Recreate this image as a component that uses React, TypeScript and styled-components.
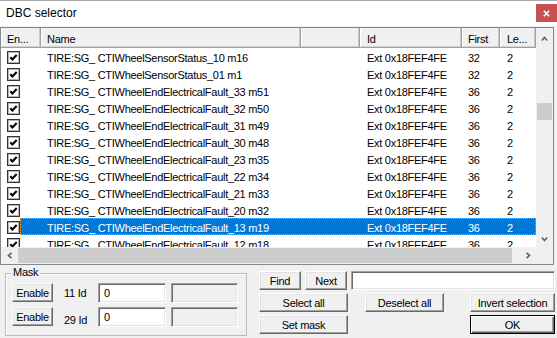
import React from "react";
import styled, { createGlobalStyle } from "styled-components";

const GlobalStyle = createGlobalStyle`
  html, body { margin: 0; padding: 0; background: #f0f0f0; }
  body {
    font-family: "Liberation Sans", Arial, sans-serif;
    font-size: 11px;
    letter-spacing: -0.28px;
    color: #000;
  }
  * { box-sizing: border-box; }
`;

const Window = styled.div`
  width: 557px;
  height: 338px;
  background: #f0f0f0;
  display: flex;
  flex-direction: column;
  overflow: hidden;
`;

const TitleBar = styled.div`
  height: 26px;
  flex-shrink: 0;
  background: #fff;
  border-top: 1px solid #a8a8a8;
  display: flex;
  align-items: flex-start;
  justify-content: space-between;
`;

const Title = styled.div`
  padding-left: 6px;
  font-size: 12px;
  letter-spacing: 0;
  line-height: 24px;
`;

const CloseButton = styled.div`
  width: 21px;
  height: 18px;
  margin-top: 3px;
  background: #c75050;
  display: flex;
  align-items: center;
  justify-content: center;
`;

const ListView = styled.div`
  margin-top: 1px;
  width: 554px;
  height: 238px;
  flex-shrink: 0;
  border: 1px solid #828790;
  background: #fff;
  display: grid;
  grid-template-columns: 535px 17px;
  grid-template-rows: 219px 17px;
`;

const ListMain = styled.div`
  display: flex;
  flex-direction: column;
  overflow: hidden;
`;

const Header = styled.div`
  display: flex;
  height: 20px;
  flex-shrink: 0;
`;

const HeaderCell = styled.div<{ $w: number; $pad: number }>`
  width: ${(p) => p.$w}px;
  flex-shrink: 0;
  height: 20px;
  padding: 5px 0 0 ${(p) => p.$pad}px;
  line-height: 13px;
  white-space: nowrap;
  overflow: hidden;
  background: #f0f0f0;
  border-right: 1px solid #a0a0a0;
  border-bottom: 1px solid #a0a0a0;
  box-shadow: inset 1px 0 #fff, inset -1px 0 #c9c9c9, inset 0 -1px #d4d4d4;
`;

const Rows = styled.div`
  flex: 1;
  overflow: hidden;
  display: flex;
  flex-direction: column;
`;

const Row = styled.div`
  display: flex;
  height: 17px;
  flex-shrink: 0;
`;

const CheckCell = styled.div`
  width: 19px;
  flex-shrink: 0;
  padding: 3px 0 0 6px;
`;

const RowBody = styled.div<{ $selected?: boolean }>`
  display: flex;
  width: 516px;
  flex-shrink: 0;
  background: ${(p) => (p.$selected ? "#0078d7" : "transparent")};
  color: ${(p) => (p.$selected ? "#fff" : "#000")};
  outline: ${(p) => (p.$selected ? "1px dotted #f0a040" : "none")};
  outline-offset: -1px;
`;

const Cell = styled.div<{ $w: number; $pad: number }>`
  width: ${(p) => p.$w}px;
  flex-shrink: 0;
  padding: 4px 0 0 ${(p) => p.$pad}px;
  line-height: 13px;
  white-space: nowrap;
  overflow: hidden;
`;

const VScroll = styled.div`
  background: #f0f0f0;
  display: flex;
  flex-direction: column;
`;

const ArrowBox = styled.div<{ $h?: number; $w?: number }>`
  height: ${(p) => (p.$h ? `${p.$h}px` : "auto")};
  width: ${(p) => (p.$w ? `${p.$w}px` : "auto")};
  flex-shrink: 0;
  display: flex;
  align-items: center;
  justify-content: center;
`;

const VThumb = styled.div`
  margin: 53px 1px 0;
  height: 17px;
  background: #cdcdcd;
`;

const Spacer = styled.div`
  flex: 1;
`;

const HScroll = styled.div`
  background: #f0f0f0;
  display: flex;
`;

const HThumb = styled.div`
  width: 494px;
  margin: 1px 0;
  background: #cdcdcd;
`;

const Corner = styled.div`
  background: #f0f0f0;
`;

const Bottom = styled.div`
  display: flex;
  align-items: flex-start;
`;

const Group = styled.div`
  position: relative;
  margin: 8px 0 0 5px;
  width: 242px;
  height: 63px;
  border: 1px solid #bcbcbc;
  box-shadow: inset 1px 1px #fff;
  padding: 9px 0 0 6px;
  display: flex;
  flex-direction: column;
  gap: 4px;
`;

const Legend = styled.span`
  position: absolute;
  top: -8px;
  left: 5px;
  padding: 0 2px;
  line-height: 13px;
  background: #f0f0f0;
`;

const GroupRow = styled.div`
  display: flex;
  align-items: flex-start;
  height: 20px;
`;

const IdLabel = styled.div<{ $drop: number }>`
  width: 34px;
  margin-left: 11px;
  padding-top: ${(p) => p.$drop}px;
  line-height: 13px;
  white-space: nowrap;
`;

const TextBox = styled.div<{ $w: number; $ml?: number; $disabled?: boolean; $h?: number }>`
  width: ${(p) => p.$w}px;
  height: ${(p) => p.$h ?? 20}px;
  margin-left: ${(p) => p.$ml ?? 0}px;
  background: ${(p) => (p.$disabled ? "#f0f0f0" : "#fff")};
  border-style: solid;
  border-width: 1px;
  border-color: #a0a0a0 #fff #fff #a0a0a0;
  box-shadow: inset 1px 1px #696969, inset -1px -1px #e3e3e3;
  padding: 0 0 0 5px;
  display: flex;
  align-items: center;
  line-height: 13px;
`;

const Button = styled.button<{ $w: number; $ml?: number; $default?: boolean }>`
  width: ${(p) => p.$w}px;
  height: 19px;
  margin: 0 0 0 ${(p) => (p.$ml === -1 ? "auto" : `${p.$ml ?? 0}px`)};
  padding: 0;
  flex-shrink: 0;
  font: inherit;
  letter-spacing: inherit;
  color: #000;
  background: #f0f0f0;
  border-style: solid;
  border-width: 1px;
  border-color: ${(p) => (p.$default ? "#000" : "#fff #696969 #696969 #fff")};
  box-shadow: ${(p) =>
    p.$default
      ? "inset 1px 1px #fff, inset -1px -1px #696969, inset -2px -2px #a0a0a0"
      : "inset -1px -1px #a0a0a0, inset 1px 1px #e3e3e3"};
  display: flex;
  align-items: center;
  justify-content: center;
`;

const Panel = styled.div`
  margin: 6px 0 0 12px;
  width: 296px;
  display: flex;
  flex-direction: column;
  gap: 3px;
`;

const PanelRow = styled.div`
  display: flex;
  height: 19px;
`;

const CheckBox = () => (
  <svg width="13" height="13" viewBox="0 0 13 13">
    <rect x="0.5" y="0.5" width="12" height="12" fill="#fff" stroke="#333" />
    <rect x="1.5" y="1.5" width="10" height="10" fill="none" stroke="#b5b5b5" />
    <polyline points="3.3,6.2 5.4,8.4 9.7,4" fill="none" stroke="#000" strokeWidth="2.1" />
  </svg>
);

const Chevron = ({ dir }: { dir: "up" | "down" | "left" | "right" }) => {
  const pts = {
    up: "0.8,4.5 3.5,1.5 6.2,4.5",
    down: "0.8,1.5 3.5,4.5 6.2,1.5",
    left: "4.5,0.8 1.5,3.5 4.5,6.2",
    right: "1.5,0.8 4.5,3.5 1.5,6.2",
  }[dir];
  const horiz = dir === "left" || dir === "right";
  return (
    <svg width={horiz ? 6 : 7} height={horiz ? 7 : 6} viewBox={horiz ? "0 0 6 7" : "0 0 7 6"}>
      <polyline points={pts} fill="none" stroke="#606060" strokeWidth="1.6" />
    </svg>
  );
};

const cols = [
  { w: 21, pad: 0 },
  { w: 260, pad: 6 },
  { w: 59, pad: 6 },
  { w: 102, pad: 7 },
  { w: 38, pad: 6 },
  { w: 36, pad: 7 },
];

const rows = [
  { name: "TIRE:SG_ CTIWheelSensorStatus_10 m16", first: "32" },
  { name: "TIRE:SG_ CTIWheelSensorStatus_01 m1", first: "32" },
  { name: "TIRE:SG_ CTIWheelEndElectricalFault_33 m51", first: "36" },
  { name: "TIRE:SG_ CTIWheelEndElectricalFault_32 m50", first: "36" },
  { name: "TIRE:SG_ CTIWheelEndElectricalFault_31 m49", first: "36" },
  { name: "TIRE:SG_ CTIWheelEndElectricalFault_30 m48", first: "36" },
  { name: "TIRE:SG_ CTIWheelEndElectricalFault_23 m35", first: "36" },
  { name: "TIRE:SG_ CTIWheelEndElectricalFault_22 m34", first: "36" },
  { name: "TIRE:SG_ CTIWheelEndElectricalFault_21 m33", first: "36" },
  { name: "TIRE:SG_ CTIWheelEndElectricalFault_20 m32", first: "36" },
  { name: "TIRE:SG_ CTIWheelEndElectricalFault_13 m19", first: "36", selected: true },
  { name: "TIRE:SG_ CTIWheelEndElectricalFault_12 m18", first: "36" },
];

export default function App() {
  return (
    <>
      <GlobalStyle />
      <Window>
        <TitleBar>
          <Title>DBC selector</Title>
          <CloseButton>
            <svg width="7" height="7" viewBox="0 0 7 7">
              <path d="M0.8 0.8 L6.2 6.2 M6.2 0.8 L0.8 6.2" stroke="#fff" strokeWidth="1.6" />
            </svg>
          </CloseButton>
        </TitleBar>

        <ListView>
          <ListMain>
            <Header>
              <HeaderCell $w={40} $pad={6}>En...</HeaderCell>
              <HeaderCell $w={260} $pad={6}>Name</HeaderCell>
              <HeaderCell $w={59} $pad={6}></HeaderCell>
              <HeaderCell $w={102} $pad={7}>Id</HeaderCell>
              <HeaderCell $w={38} $pad={6}>First</HeaderCell>
              <HeaderCell $w={36} $pad={7}>Le...</HeaderCell>
            </Header>
            <Rows>
              {rows.map((r) => (
                <Row key={r.name}>
                  <CheckCell>
                    <CheckBox />
                  </CheckCell>
                  <RowBody $selected={r.selected}>
                    <Cell $w={cols[0].w} $pad={cols[0].pad} />
                    <Cell $w={cols[1].w} $pad={cols[1].pad}>{r.name}</Cell>
                    <Cell $w={cols[2].w} $pad={cols[2].pad} />
                    <Cell $w={cols[3].w} $pad={cols[3].pad}>Ext 0x18FEF4FE</Cell>
                    <Cell $w={cols[4].w} $pad={cols[4].pad}>{r.first}</Cell>
                    <Cell $w={cols[5].w} $pad={cols[5].pad}>2</Cell>
                  </RowBody>
                </Row>
              ))}
            </Rows>
          </ListMain>
          <VScroll>
            <ArrowBox $h={22}>
              <Chevron dir="up" />
            </ArrowBox>
            <VThumb />
            <Spacer />
            <ArrowBox $h={17}>
              <Chevron dir="down" />
            </ArrowBox>
          </VScroll>
          <HScroll>
            <ArrowBox $w={17}>
              <Chevron dir="left" />
            </ArrowBox>
            <HThumb />
            <Spacer />
            <ArrowBox $w={17}>
              <Chevron dir="right" />
            </ArrowBox>
          </HScroll>
          <Corner />
        </ListView>

        <Bottom>
          <Group>
            <Legend>Mask</Legend>
            <GroupRow>
              <Button $w={41}>Enable</Button>
              <IdLabel $drop={4}>11 Id</IdLabel>
              <TextBox $w={68}>0</TextBox>
              <TextBox $w={67} $ml={5} $disabled />
            </GroupRow>
            <GroupRow>
              <Button $w={41}>Enable</Button>
              <IdLabel $drop={7}>29 Id</IdLabel>
              <TextBox $w={68}>0</TextBox>
              <TextBox $w={67} $ml={5} $disabled />
            </GroupRow>
          </Group>

          <Panel>
            <PanelRow>
              <Button $w={42}>Find</Button>
              <Button $w={42} $ml={4}>Next</Button>
              <TextBox $w={204} $ml={4} $h={19} />
            </PanelRow>
            <PanelRow>
              <Button $w={89}>Select all</Button>
              <Button $w={79} $ml={17}>Deselect all</Button>
              <Button $w={85} $ml={26}>Invert selection</Button>
            </PanelRow>
            <PanelRow>
              <Button $w={89}>Set mask</Button>
              <Button $w={85} $ml={-1} $default>OK</Button>
            </PanelRow>
          </Panel>
        </Bottom>
      </Window>
    </>
  );
}
